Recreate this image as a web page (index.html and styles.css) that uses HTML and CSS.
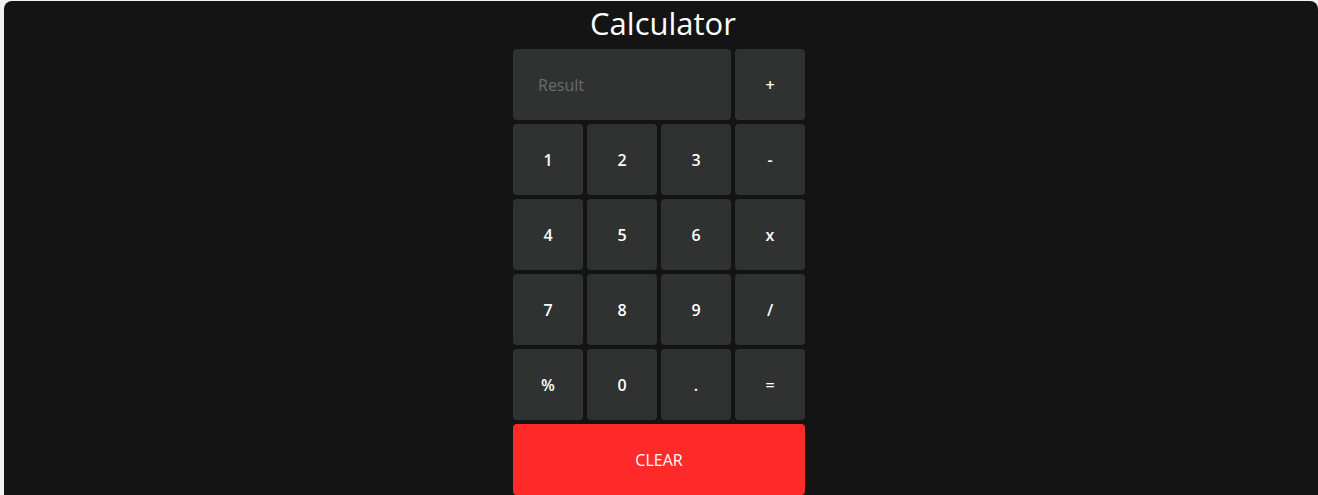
FILE: index.html
```html
<!DOCTYPE html>
<html lang="en">
<head>
<meta charset="utf-8">
<title>Calculator</title>
<link rel="stylesheet" href="styles.css">
</head>
<body>
<main class="panel">
  <h1 class="title">Calculator</h1>
  <div class="calc">
    <div class="result">Result</div>
    <button class="key">+</button>
    <button class="key">1</button>
    <button class="key">2</button>
    <button class="key">3</button>
    <button class="key">-</button>
    <button class="key">4</button>
    <button class="key">5</button>
    <button class="key">6</button>
    <button class="key">x</button>
    <button class="key">7</button>
    <button class="key">8</button>
    <button class="key">9</button>
    <button class="key">/</button>
    <button class="key">%</button>
    <button class="key">0</button>
    <button class="key">.</button>
    <button class="key">=</button>
    <button class="clear">CLEAR</button>
  </div>
</main>
</body>
</html>
```
FILE: styles.css
```css
html, body {
  margin: 0;
  padding: 0;
  height: 100%;
}
body {
  background: #f2f2f2;
  font-family: "Open Sans", "Liberation Sans", sans-serif;
  padding: 1px 0 0 4px;
  box-sizing: border-box;
  overflow: hidden;
}
.panel {
  background: #141414;
  height: 100%;
  border-radius: 8px 8px 0 0;
  display: flex;
  flex-direction: column;
  align-items: center;
}
.title {
  margin: 0 0 0 4px;
  color: #ffffff;
  font-size: 31px;
  font-weight: 400;
  line-height: 44px;
}
.calc {
  margin-top: 4px;
  margin-right: 4px;
  display: grid;
  grid-template-columns: repeat(4, 70px);
  grid-auto-rows: 71px;
  gap: 4px;
}
.result {
  grid-column: span 3;
  background: #2f3231;
  border-radius: 4px;
  color: #6a6d6c;
  font-size: 16px;
  display: flex;
  align-items: center;
  padding-left: 25px;
}
.key {
  background: #2f3231;
  border: none;
  border-radius: 4px;
  color: #ffffff;
  font-family: inherit;
  font-size: 16px;
  font-weight: 600;
  padding: 0;
}
.clear {
  grid-column: span 4;
  background: #ff2a2a;
  border: none;
  border-radius: 4px;
  color: #ffffff;
  font-family: inherit;
  font-size: 16px;
  font-weight: 400;
  padding: 0;
}
```
